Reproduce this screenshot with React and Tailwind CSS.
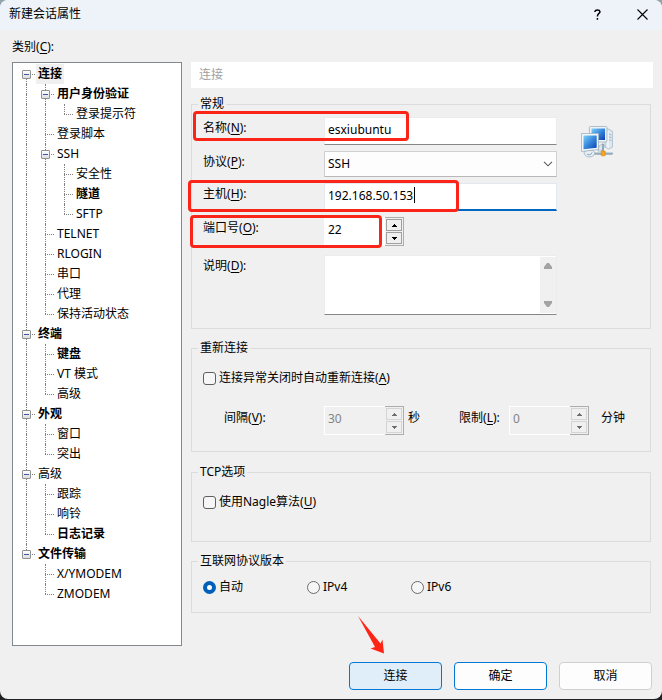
import { useState } from 'react'
import clsx from 'clsx'

const TREE = [
  {
    label: '连接', bold: true, selected: true, children: [
      { label: '用户身份验证', bold: true, children: [{ label: '登录提示符' }] },
      { label: '登录脚本' },
      { label: 'SSH', children: [{ label: '安全性' }, { label: '隧道', bold: true }, { label: 'SFTP' }] },
      { label: 'TELNET' },
      { label: 'RLOGIN' },
      { label: '串口' },
      { label: '代理' },
      { label: '保持活动状态' },
    ],
  },
  { label: '终端', bold: true, children: [{ label: '键盘', bold: true }, { label: 'VT 模式' }, { label: '高级' }] },
  { label: '外观', bold: true, children: [{ label: '窗口' }, { label: '突出' }] },
  { label: '高级', children: [{ label: '跟踪' }, { label: '响铃' }, { label: '日志记录', bold: true }] },
  { label: '文件传输', bold: true, children: [{ label: 'X/YMODEM' }, { label: 'ZMODEM' }] },
]

function Branch({ top, bottom, arm, children }) {
  return (
    <span className="relative ml-[9px] flex w-2.5 shrink-0 flex-col">
      <span className={clsx('h-2.5 border-dotted border-[#808080]', top && 'border-l')} />
      <span className={clsx('mr-px h-2.5 border-dotted border-[#808080]', bottom && 'border-l', arm && 'border-t')} />
      {children}
    </span>
  )
}

// trail: for every ancestor, whether its vertical line goes on below
function TreeNode({ node, trail = [], first, last }) {
  const [open, setOpen] = useState(true)
  return (
    <li role="treeitem" aria-expanded={node.children ? open : undefined}>
      <div className="flex h-5">
        {trail.map((goesOn, i) => (
          <Branch key={i} top={goesOn} bottom={goesOn} />
        ))}
        <Branch top={!first} bottom={!last} arm>
          {node.children && (
            <button
              type="button"
              aria-label={node.label}
              onClick={() => setOpen(!open)}
              className="absolute top-1.5 -left-1 flex size-[9px] items-center justify-center rounded-[1px] border border-[#919191] bg-linear-to-b from-white to-[#dcdce2]"
            >
              <span className="h-px w-[5px] bg-[#3c57a6]" />
            </button>
          )}
        </Branch>
        <span className={clsx('px-0.5 leading-5', node.bold && 'font-bold', node.selected && 'bg-[#f0f0f0]')}>
          {node.label}
        </span>
      </div>
      {node.children && open && (
        <ul role="group">
          {node.children.map((child, i) => (
            <TreeNode
              key={child.label}
              node={child}
              trail={[...trail, !last]}
              last={i === node.children.length - 1}
            />
          ))}
        </ul>
      )}
    </li>
  )
}

function Group({ title, className, children }) {
  return (
    <fieldset className={clsx('mr-0.5 min-w-0 border border-[#dcdcdc] px-[11px]', className)}>
      <legend className="-ml-[5px] px-0.5 leading-4">{title}</legend>
      {children}
    </fieldset>
  )
}

function Caption({ text, hotkey, colon = true }) {
  return (
    <>
      {text}(<span className="underline underline-offset-2">{hotkey}</span>){colon && ':'}
    </>
  )
}

function Field({ id, text, hotkey, className, children }) {
  return (
    <div className={clsx('relative flex items-start', className)}>
      <label htmlFor={id} className="w-[121px] shrink-0 pt-[3px]">
        <Caption text={text} hotkey={hotkey} />
      </label>
      {children}
    </div>
  )
}

function Marker({ className }) {
  return <span className={clsx('pointer-events-none absolute rounded-[4px] border-3 border-[#fb2418]', className)} />
}

function Spinner({ id, value, disabled }) {
  const step = clsx(
    'flex flex-1 items-center justify-center border',
    disabled ? 'border-[#d4d4d4] text-[#6d6d6d]' : 'border-[#a0a0a0] text-black',
  )
  return (
    <div className="flex h-[29px] w-20">
      <input
        id={id}
        defaultValue={value}
        disabled={disabled}
        className={clsx(
          'min-w-0 flex-1 border px-[3px] pb-1 leading-4',
          disabled ? 'border-r-0 border-white bg-[#f0f0f0] text-[#838383]' : 'border-white bg-white',
        )}
      />
      <div className="flex w-[19px] flex-col gap-px border border-l-0 border-[#adadad] p-px">
        <button type="button" aria-label="增加" disabled={disabled} className={step}>
          <svg viewBox="0 0 5 3" className="h-[3px] w-[5px]" fill="currentColor" shapeRendering="crispEdges">
            <path d="M2 0h1v1h1v1h1v1H0V2h1V1h1z" />
          </svg>
        </button>
        <button type="button" aria-label="减少" disabled={disabled} className={step}>
          <svg viewBox="0 0 5 3" className="h-[3px] w-[5px]" fill="currentColor" shapeRendering="crispEdges">
            <path d="M2 3h1V2h1V1h1V0H0v1h1v1h1z" />
          </svg>
        </button>
      </div>
    </div>
  )
}

function Check({ text, hotkey }) {
  return (
    <label className="flex items-center gap-[3px]">
      <input type="checkbox" className="size-[13px] appearance-none rounded-[3px] border border-[#5f5f5f] bg-[#f6f6f6] checked:bg-[#005fb8]" />
      <span><Caption text={text} hotkey={hotkey} colon={false} /></span>
    </label>
  )
}

function Radio({ label, checked }) {
  return (
    <label className="flex w-[104px] items-center gap-[3px]">
      <input
        type="radio"
        name="ip"
        defaultChecked={checked}
        className="size-[13px] appearance-none rounded-full border border-[#6b6b6b] bg-[#f6f6f6] checked:border-4 checked:border-[#005fb8] checked:bg-white"
      />
      {label}
    </label>
  )
}

function NetworkIcon() {
  return (
    <svg viewBox="0 0 32 32" className="size-8" aria-hidden="true">
      <defs>
        <linearGradient id="screen" x1="0" y1="0" x2="1" y2="1">
          <stop offset="0" stopColor="#7fd0f7" />
          <stop offset="0.45" stopColor="#3c8fe0" />
          <stop offset="1" stopColor="#0b3fb0" />
        </linearGradient>
        <linearGradient id="pipe" x1="0" y1="0" x2="0" y2="1">
          <stop offset="0" stopColor="#dbe8ef" />
          <stop offset="1" stopColor="#5f7f90" />
        </linearGradient>
      </defs>
      <path d="M24 2.5l3 .3 4.500 2.400v16l-4 1.800-3.500-2z" fill="#dce7ef" stroke="#a9bccb" strokeWidth=".8" />
      <path d="M27 5v17" stroke="#fff" />
      <path d="M28 8l2.500 1M28 11l2.500 .5M28 14l2.500 .2" stroke="#90aabd" strokeWidth=".8" />
      <rect x="8.400" y=".5" width="17.500" height="15.500" rx="1" fill="#edf3f7" stroke="#9eb0bd" strokeWidth=".8" />
      <rect x="10.500" y="2.500" width="13.500" height="11.500" fill="url(#screen)" />
      <path d="M18 20l4-2.500 2 3-4 4.500h-3z" fill="#dbe7ef" stroke="#91a8b8" strokeWidth=".6" />
      <path d="M22 18v7" stroke="#8299a6" strokeWidth="1.500" />
      <rect x="12" y="26" width="20" height="2.600" rx="1.300" fill="url(#pipe)" />
      <rect x="20.200" y="25" width="4" height="4.800" rx=".6" fill="#f7a51a" stroke="#d98208" strokeWidth=".6" />
      <path d="M3 25.500l3-1h6l2 2.500c-1 3-3 4-6 4s-5-2-5-5.500z" fill="#e6eff5" stroke="#9cb2c1" strokeWidth=".8" />
      <path d="M6 28c2 1.400 4 1 5-1.500" fill="none" stroke="#7f99aa" />
      <path d="M.5 7.500h17v16L.5 25.500z" fill="#f2f7fa" stroke="#9eb0bd" strokeWidth=".8" />
      <path d="M2.500 9.500h13.200v12.300L2.500 23.300z" fill="url(#screen)" />
    </svg>
  )
}

export default function App() {
  return (
    <div className="flex min-h-screen flex-col bg-linear-to-b from-[#93a5ac] to-[#202124] to-40% pb-px font-['Noto_Sans','Noto_Sans_CJK_SC',sans-serif] text-[12px] leading-4 text-black">
      <form className="flex flex-1 flex-col overflow-hidden rounded-lg bg-[#f0f0f0]" onSubmit={e => e.preventDefault()}>
        {/* Title bar */}
        <header className="flex h-[30px] items-center bg-[#eef3fa] pb-0.5 pl-[9px]">
          <h1 className="flex-1">新建会话属性</h1>
          <button type="button" aria-label="帮助" className="flex h-7 w-[50px] items-center justify-center">
            <svg viewBox="0 0 7 11" className="h-[11px] w-[7px]" fill="none" stroke="currentColor" strokeWidth="1.5">
              <path d="M1 3V2.300Q1.200 .9 3.400 .9T6 2.600Q6 3.800 4.700 4.700T3.400 7.600M3.400 9v1.700" />
            </svg>
          </button>
          <button type="button" aria-label="关闭" className="flex h-7 w-10 items-center justify-center">
            <svg viewBox="0 0 11 11" className="size-[11px]" fill="none" stroke="currentColor" strokeWidth="1.1">
              <path d="M.5 .5l10 10M10.500 .5l-10 10" />
            </svg>
          </button>
        </header>

        <main className="flex flex-1 flex-col pt-[9px] pr-[9px] pl-3">
          <h2 id="category" className="mb-[7px]"><Caption text="类别" hotkey="C" /></h2>
          <div className="flex flex-1 gap-[9px]">
            <ul role="tree" aria-labelledby="category" className="w-[170px] shrink-0 border border-[#828790] bg-white pt-px pl-1">
              {TREE.map((node, i) => (
                <TreeNode key={node.label} node={node} first={i === 0} last={i === TREE.length - 1} />
              ))}
            </ul>

            <div className="flex min-w-0 flex-1 flex-col">
              <h2 className="mb-2 bg-white px-2 py-[5px] text-[#a0a0a0]">连接</h2>

              <Group title="常规" className="mb-[11px] pt-[5px] pb-[13px]">
                <div className="flex items-start">
                  <div className="flex min-w-0 flex-1 flex-col gap-1.5">
                    <Field id="name" text="名称" hotkey="N">
                      <input id="name" defaultValue="esxiubuntu" className="h-7 min-w-0 flex-1 border border-[#ececec] border-b-[#868686] bg-white px-[3px] pb-1" />
                      <Marker className="-top-1.5 -left-2.5 h-[30px] w-[216px]" />
                    </Field>
                    <Field id="protocol" text="协议" hotkey="P">
                      <div className="relative min-w-0 flex-1">
                        <select id="protocol" className="block h-[26px] w-full appearance-none border border-[#d0d0d0] border-b-[#b8b8b8] bg-[#fdfdfd] px-[3px]">
                          <option>SSH</option>
                        </select>
                        <svg viewBox="0 0 10 6" className="pointer-events-none absolute top-2.5 right-1 h-1.5 w-2.5" fill="none" stroke="#5a5a5a" strokeWidth="1.1">
                          <path d="M1 .8l4 4 4-4" />
                        </svg>
                      </div>
                    </Field>
                    <Field id="host" text="主机" hotkey="H">
                      <div className="relative min-w-0 flex-1">
                        <input id="host" defaultValue="192.168.50.153" className="block h-7 w-full border border-b-2 border-[#e4e9f0] border-b-[#0067c0] bg-white px-[3px] pb-[3px]" />
                        <span className="absolute top-1 left-[90px] h-4 w-px bg-black" />
                      </div>
                      <Marker className="-top-[3px] -left-[15px] h-8 w-[271px]" />
                    </Field>
                    <Field id="port" text="端口号" hotkey="O" className="h-8">
                      <Spinner id="port" value="22" />
                      <Marker className="-top-0.5 -left-[13px] h-[33px] w-[192px]" />
                    </Field>
                    <Field id="note" text="说明" hotkey="D">
                      <div className="relative min-w-0 flex-1">
                        <textarea id="note" className="block h-[60px] w-full resize-none border border-[#ececec] border-b-[#868686] bg-white px-[3px]" />
                        <div className="absolute top-0.5 right-px bottom-0.5 flex w-4 flex-col items-center justify-between bg-[#f0f0f0] py-1.5">
                          <svg viewBox="0 0 8 6" className="h-1.5 w-2" fill="#a3a3a3"><path d="M3 0h2l3 4v2H0V4z" /></svg>
                          <svg viewBox="0 0 8 6" className="h-1.5 w-2" fill="#a3a3a3"><path d="M3 6h2l3-4V0H0v2z" /></svg>
                        </div>
                      </div>
                    </Field>
                  </div>
                  <div className="mt-[9px] mr-[26px] ml-6 shrink-0">
                    <NetworkIcon />
                  </div>
                </div>
              </Group>

              <Group title="重新连接" className="mb-3 pt-3.5 pb-4">
                <Check text="连接异常关闭时自动重新连接" hotkey="A" />
                <div className="mt-5 flex items-start pl-[21px]">
                  <label htmlFor="interval" className="w-[100px] pt-1"><Caption text="间隔" hotkey="V" /></label>
                  <Spinner id="interval" value="30" disabled />
                  <span className="w-[55px] pt-1 pl-1">秒</span>
                  <label htmlFor="limit" className="w-[50px] pt-1"><Caption text="限制" hotkey="L" /></label>
                  <Spinner id="limit" value="0" disabled />
                  <span className="pt-1 pl-3">分钟</span>
                </div>
              </Group>

              <Group title="TCP选项" className="mb-[11px] pt-3.5 pb-[31px]">
                <Check text="使用Nagle算法" hotkey="U" />
              </Group>

              <Group title="互联网协议版本" className="pt-2.5 pb-[17px]">
                <div className="flex">
                  <Radio label="自动" checked />
                  <Radio label="IPv4" />
                  <Radio label="IPv6" />
                </div>
              </Group>
            </div>
          </div>
        </main>

        <footer className="flex justify-end gap-3 pt-4 pr-2.5 pb-[9px]">
          <div className="relative">
            <button type="submit" className="h-7 w-[93px] rounded-[4px] border border-[#0078d4] bg-[#e0eef9]">连接</button>
            <svg viewBox="0 0 27 38" className="pointer-events-none absolute -top-[46px] left-[9px] h-[38px] w-[27px]" fill="#ff2416">
              <path d="M0 0L22.500 27.500 24.500 23.500 26 37.500 12.500 32.500 17 31Z" />
            </svg>
          </div>
          <button type="button" className="h-7 w-[93px] rounded-[4px] border border-[#0078d4] bg-[#fdfdfd]">确定</button>
          <button type="button" className="h-7 w-[93px] rounded-[4px] border border-[#d0d0d0] bg-[#fdfdfd]">取消</button>
        </footer>
      </form>
    </div>
  )
}
